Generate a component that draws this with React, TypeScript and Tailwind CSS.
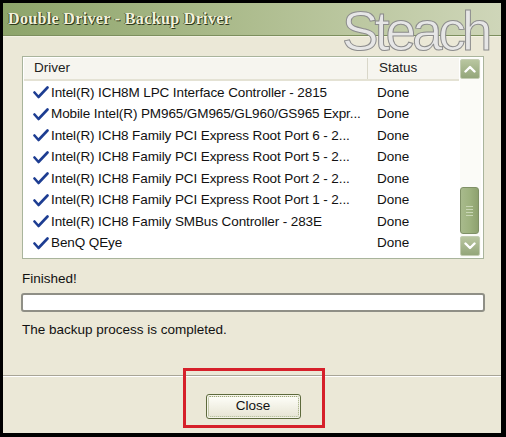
import React from "react";

const rows: string[] = [
  "Intel(R) ICH8M LPC Interface Controller - 2815",
  "Mobile Intel(R) PM965/GM965/GL960/GS965 Expr...",
  "Intel(R) ICH8 Family PCI Express Root Port 6 - 2...",
  "Intel(R) ICH8 Family PCI Express Root Port 5 - 2...",
  "Intel(R) ICH8 Family PCI Express Root Port 2 - 2...",
  "Intel(R) ICH8 Family PCI Express Root Port 1 - 2...",
  "Intel(R) ICH8 Family SMBus Controller - 283E",
  "BenQ QEye",
];

function Check() {
  return (
    <svg width="16" height="13" viewBox="0 0 16 13" className="shrink-0">
      <path d="M1.5 6.5 L5.5 11 L14.5 1.5" fill="none" stroke="#1d3d92" strokeWidth="2.6" strokeLinecap="round" strokeLinejoin="round" />
    </svg>
  );
}

function Chevron({ up }: { up: boolean }) {
  return (
    <svg width="12" height="8" viewBox="0 0 12 8">
      <path d={up ? "M1.5 6.5 L6 2 L10.5 6.5" : "M1.5 1.5 L6 6 L10.5 1.5"} fill="none" stroke="#ffffff" strokeWidth="2.4" strokeLinecap="round" strokeLinejoin="round" />
    </svg>
  );
}

export default function App() {
  return (
    <div className="w-[506px] h-[437px] overflow-hidden bg-black pt-[3px] pl-[3px] pr-[5px] pb-[4px] font-['Liberation_Sans',Arial,sans-serif] text-[13.5px] text-[#111]">
      <div className="relative h-full bg-[#ebe8d7] flex flex-col">
        {/* Title bar */}
        <div className="h-[33px] shrink-0 bg-gradient-to-r from-[#8da46a] via-[#aebd8f] to-[#cfd6b9] border-b border-[#7d8f5e] flex items-center pl-[5px]">
          <span className="font-['Liberation_Serif',serif] font-bold text-[16px] text-[#f3f2dc] [text-shadow:1px_1px_0_#2f3a1c,-1px_0_0_#4a5a30] tracking-[0.35px]">
            Double Driver - Backup Driver
          </span>
        </div>
        <div className="h-px bg-[#f4f2e4]" />

        {/* List box */}
        <div className="mt-[19px] ml-[19px] mr-[17px] h-[203px] border border-[#a9b49c] bg-white p-px flex">
          <div className="flex-1 flex flex-col">
            <div className="h-[23px] flex bg-[#f6f5ef] border-b-2 border-[#e4e2d4] text-[#222]">
              <div className="w-[344px] pl-[10px] flex items-center border-r border-[#d9d7c9]">Driver</div>
              <div className="flex-1 pl-[11px] flex items-center">Status</div>
            </div>
            <div className="pt-[1px]">
              {rows.map((r) => (
                <div key={r} className="h-[21.5px] flex items-center">
                  <div className="w-[344px] shrink-0 flex items-center pl-[9px] gap-[2px] whitespace-nowrap">
                    <Check />
                    <span className="tracking-[-0.1px]">{r}</span>
                  </div>
                  <div className="pl-[9px]">Done</div>
                </div>
              ))}
            </div>
          </div>
          {/* Scrollbar */}
          <div className="w-[21px] ml-[1px] mr-[1px] pt-px pb-px flex flex-col bg-[#fbfbf7]">
            <div className="h-[20px] w-[20px] rounded-[2px] border border-[#c4cdb3] bg-gradient-to-b from-[#b9c6a0] to-[#94a67a] flex items-center justify-center">
              <Chevron up />
            </div>
            <div className="flex-1 flex flex-col justify-end">
              <div className="h-[47px] w-[19px] mb-[2px] rounded-[3px] border border-[#7f9066] bg-gradient-to-r from-[#a8ba8c] via-[#9eb27f] to-[#8ea16f] flex flex-col items-center justify-center gap-[2px]">
                <div className="w-[7px] h-px bg-[#c9d6b5]" />
                <div className="w-[7px] h-px bg-[#c9d6b5]" />
                <div className="w-[7px] h-px bg-[#c9d6b5]" />
                <div className="w-[7px] h-px bg-[#c9d6b5]" />
              </div>
            </div>
            <div className="h-[20px] w-[20px] rounded-[2px] border border-[#c4cdb3] bg-gradient-to-b from-[#b9c6a0] to-[#94a67a] flex items-center justify-center">
              <Chevron up={false} />
            </div>
          </div>
        </div>

        {/* Status */}
        <div className="ml-[19px] mr-[17px] mt-[10px] text-[#111]">Finished!</div>
        <div className="ml-[18px] mr-[16px] mt-[4px] h-[19px] rounded-[3px] border-2 border-[#8f8f86] bg-white" />
        <div className="ml-[19px] mr-[17px] mt-[8px] text-[#111]">The backup process is completed.</div>

        {/* Separator */}
        <div className="mt-[34px] h-px bg-[#a8a597]" />
        <div className="h-px bg-white" />

        {/* Footer */}
        <div className="flex justify-center pt-[17px] pl-[2px]">
          <button className="w-[95px] h-[25px] rounded-[3px] border border-[#5d6a3c] p-px bg-[#f5f4ea]">
            <div className="h-full w-full rounded-[2px] border border-dotted border-[#9aa676] bg-gradient-to-b from-[#fdfdf7] to-[#e8e6d6] flex items-center justify-center text-[#111]">
              Close
            </div>
          </button>
        </div>

        {/* Red highlight box */}
        <div className="absolute left-[180px] top-[365px] w-[142px] h-[60px] border-[3px] border-[#d6202a]" />

        {/* Watermark */}
        <div className="absolute left-[339px] top-[5px] font-['Liberation_Sans',Arial,sans-serif] text-[55px] tracking-[-4.2px] text-[#e6e6e6] [-webkit-text-stroke:1px_#8c8c8c] leading-[46px]">
          Steach
        </div>
      </div>
    </div>
  );
}
